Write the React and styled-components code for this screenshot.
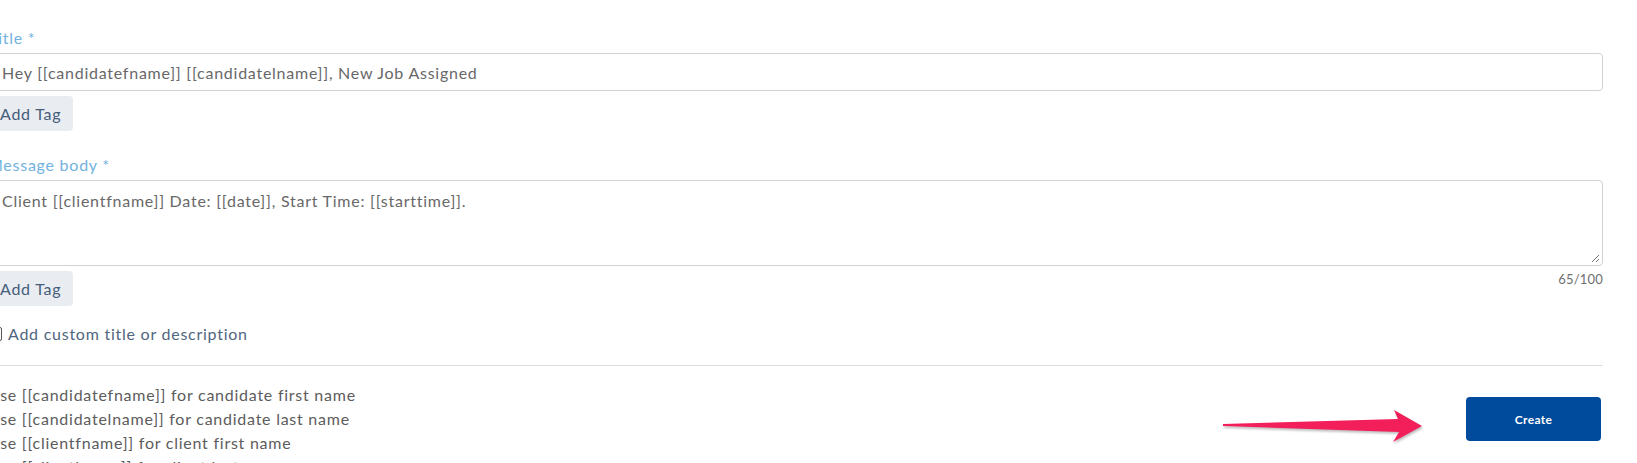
import React from 'react';
import styled, { createGlobalStyle } from 'styled-components';

const GlobalStyle = createGlobalStyle`
  html, body {
    margin: 0;
    padding: 0;
    background: #ffffff;
    overflow: hidden;
  }
  body {
    font-family: Lato, "Noto Sans", sans-serif;
    letter-spacing: 0.75px;
  }
`;

const Page = styled.div`
  position: relative;
  width: 1637px;
  height: 463px;
  overflow: hidden;
`;

const Form = styled.div`
  display: flex;
  flex-direction: column;
  margin-left: -12px;
  width: 1615px;
  padding-top: 27px;
`;

const Label = styled.label`
  display: block;
  font-size: 16px;
  line-height: 22px;
  color: #72b2dd;
  margin-bottom: 4px;
`;

const Input = styled.div`
  box-sizing: border-box;
  height: 38px;
  border: 1px solid #d2d2d2;
  border-radius: 4px;
  padding: 0 13px;
  display: flex;
  align-items: center;
  font-size: 16px;
  color: #686868;
`;

const TextArea = styled.div`
  position: relative;
  box-sizing: border-box;
  height: 86px;
  border: 1px solid #d2d2d2;
  border-radius: 4px;
  padding: 10px 13px;
  font-size: 16px;
  line-height: 20px;
  color: #686868;
`;

const Grip = styled.svg`
  position: absolute;
  right: 2px;
  bottom: 2px;
`;

const TagRow = styled.div`
  display: flex;
  justify-content: space-between;
  align-items: flex-start;
  margin-top: 5px;
`;

const TagButton = styled.button`
  box-sizing: border-box;
  height: 35px;
  border: none;
  border-radius: 4px;
  background: #e9ecf0;
  padding: 0 12px;
  font-family: inherit;
  letter-spacing: inherit;
  font-size: 16px;
  color: #465d7c;
`;

const Counter = styled.span`
  font-size: 13px;
  line-height: 14px;
  margin-top: 1px;
  letter-spacing: 0.2px;
  color: #707070;
`;

const Field = styled.div`
  display: flex;
  flex-direction: column;
  margin-top: ${p => p.$top || 0}px;
`;

const CheckRow = styled.div`
  display: flex;
  align-items: center;
  gap: 6px;
  margin-top: 18px;
  font-size: 16px;
  color: #506680;
`;

const Box = styled.span`
  width: 14px;
  height: 14px;
  box-sizing: border-box;
  border: 1px solid #555;
  border-radius: 2px;
`;

const Divider = styled.hr`
  border: none;
  border-top: 1px solid #dedede;
  margin: 22px 0 0;
`;

const Footer = styled.div`
  display: flex;
  justify-content: space-between;
  align-items: flex-start;
  margin-top: 17px;
`;

const HelpList = styled.ul`
  list-style: none;
  margin: 0;
  padding: 0;
  font-size: 16px;
  line-height: 24px;
  color: #5c5c5c;
`;

const CreateButton = styled.button`
  width: 135px;
  height: 44px;
  margin-top: 14px;
  margin-right: 2px;
  border: none;
  border-radius: 4px;
  background: #004b9b;
  color: #ffffff;
  font-family: inherit;
  font-size: 12px;
  font-weight: 700;
  letter-spacing: 0.3px;
`;

const Arrow = styled.svg`
  position: absolute;
  left: 1218px;
  top: 405px;
  filter: drop-shadow(1px 2px 1px rgba(0, 0, 0, 0.25));
`;

const helpLines = [
  'Use [[candidatefname]] for candidate first name',
  'Use [[candidatelname]] for candidate last name',
  'Use [[clientfname]] for client first name',
  'Use [[clientlname]] for client last name',
];

export default function App() {
  return (
    <Page>
      <GlobalStyle />
      <Form>
        <Field>
          <Label>Title *</Label>
          <Input>Hey [[candidatefname]] [[candidatelname]], New Job Assigned</Input>
          <TagRow>
            <TagButton>Add Tag</TagButton>
          </TagRow>
        </Field>
        <Field $top={23}>
          <Label>Message body *</Label>
          <TextArea>
            Client [[clientfname]] Date: [[date]], Start Time: [[starttime]].
            <Grip width="10" height="10" viewBox="0 0 10 10">
              <path d="M9 2 L2 9 M9 6 L6 9" stroke="#777" strokeWidth="1" />
            </Grip>
          </TextArea>
          <TagRow>
            <TagButton>Add Tag</TagButton>
            <Counter>65/100</Counter>
          </TagRow>
        </Field>
        <CheckRow>
          <Box />
          Add custom title or description
        </CheckRow>
        <Divider />
        <Footer>
          <HelpList>
            {helpLines.map(line => <li key={line}>{line}</li>)}
          </HelpList>
          <CreateButton>Create</CreateButton>
        </Footer>
      </Form>
      <Arrow width="210" height="42" viewBox="0 0 210 42">
        <polygon
          points="5,19 180,14 176,5 204,21 175,37 181,27 5,21"
          fill="#f21f5b"
        />
      </Arrow>
    </Page>
  );
}
